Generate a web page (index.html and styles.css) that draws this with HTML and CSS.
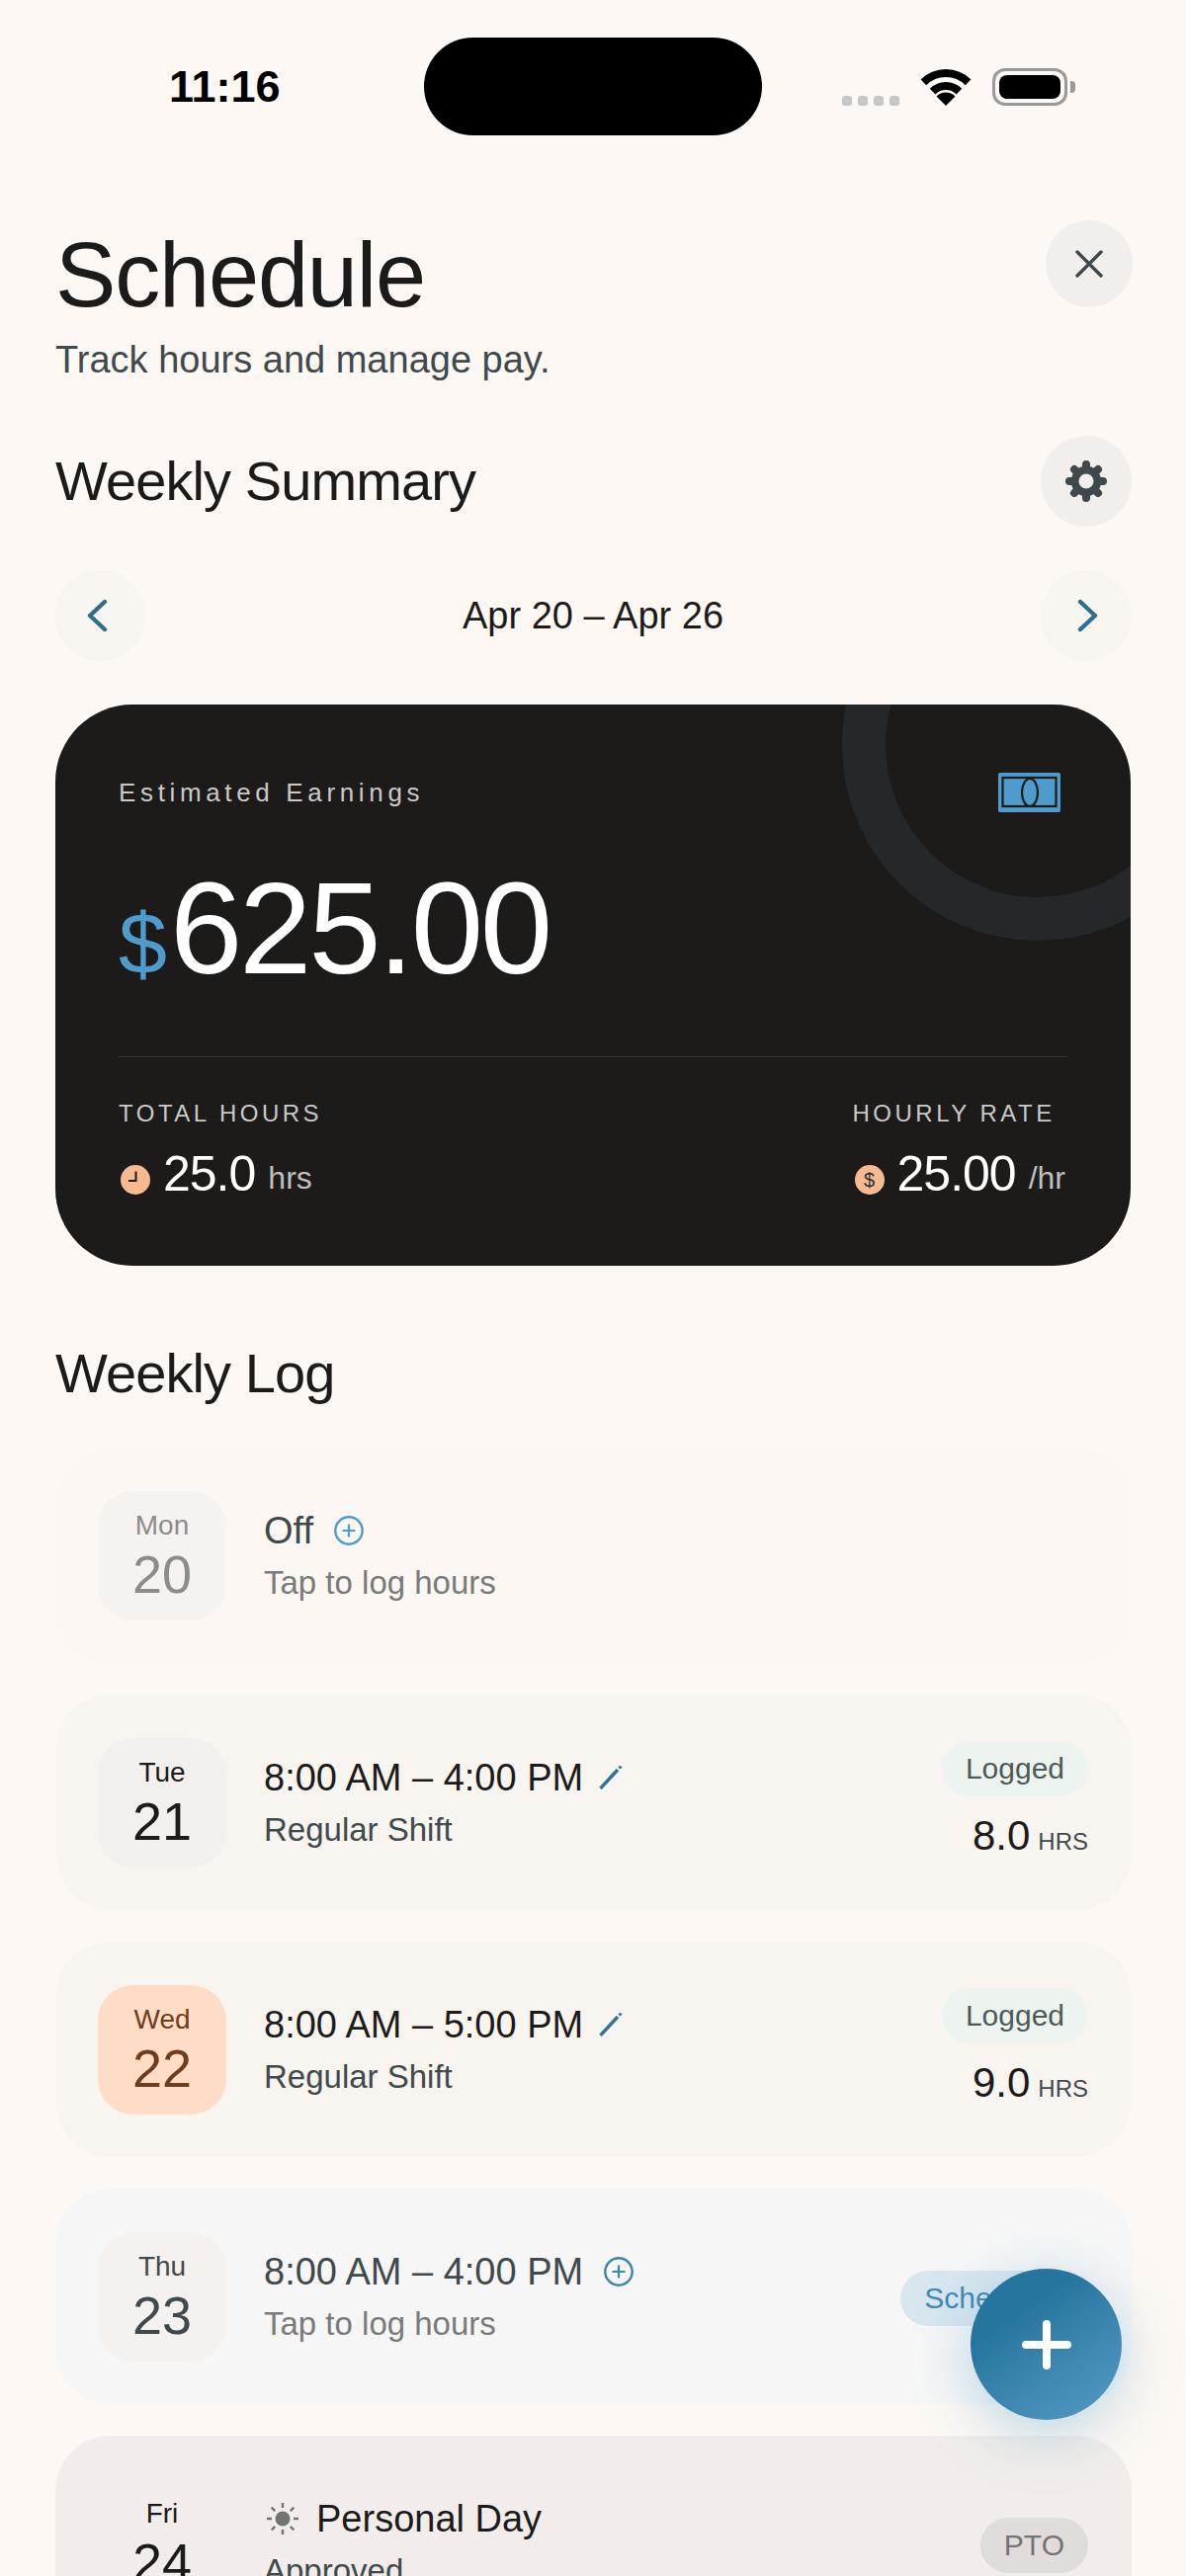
FILE: index.html
```html
<!DOCTYPE html>
<html lang="en">
<head>
    <meta charset="UTF-8">
    <meta name="viewport" content="width=device-width, initial-scale=1.0">
    <title>Schedule</title>
    <link rel="stylesheet" href="styles.css">
</head>
<body>
    <div class="status-bar">
        <div class="time">11:16</div>
        <div class="island"></div>
        <div class="status-icons">
            <div class="signal"><span></span><span></span><span></span><span></span></div>
            <svg class="wifi" viewBox="0 0 52 38">
                <path d="M3.4 14.4a32 32 0 0 1 45.2 0" fill="none" stroke="#000" stroke-width="8"/>
                <path d="M12.6 23.6a19 19 0 0 1 26.8 0" fill="none" stroke="#000" stroke-width="8"/>
                <path d="M26 38L16.5 28.5a13.5 13.5 0 0 1 19 0z"/>
            </svg>
            <div class="battery"><div class="battery-fill"></div></div>
            <div class="battery-nib"></div>
        </div>
    </div>

    <header class="page-head">
        <div>
            <h1>Schedule</h1>
            <p class="subtitle">Track hours and manage pay.</p>
        </div>
        <button class="round-btn close-btn">
            <svg width="28" height="28" viewBox="0 0 28 28"><path d="M2 2l24 24M26 2L2 26" stroke="#3f494b" stroke-width="3.4" stroke-linecap="round"/></svg>
        </button>
    </header>

    <section class="section-head">
        <h2>Weekly Summary</h2>
        <button class="round-btn gear-btn">
            <svg width="42" height="42" viewBox="0 0 24 24" fill="none" stroke="#3f494b">
                <circle cx="12" cy="12" r="6.5" stroke-width="4.4"/>
                <g stroke-width="4.6" stroke-linecap="round">
                    <path d="M12 4v-1.7M12 20v1.700M4 12h-1.700M20 12h1.700"/>
                    <path d="M6.340 6.340L5.140 5.140M17.660 6.340l1.200-1.200M6.340 17.660l-1.200 1.200M17.660 17.660l1.200 1.200"/>
                </g>
            </svg>
        </button>
    </section>

    <nav class="week-nav">
        <button class="round-btn nav-btn">
            <svg class="nav-prev" width="22" height="34" viewBox="0 0 22 34"><path d="M19 3L4 17l15 14" fill="none" stroke="#2e6f8c" stroke-width="4.400" stroke-linecap="round" stroke-linejoin="round"/></svg>
        </button>
        <div class="week-range">Apr 20 – Apr 26</div>
        <button class="round-btn nav-btn">
            <svg class="nav-next" width="22" height="34" viewBox="0 0 22 34"><path d="M3 3l15 14L3 31" fill="none" stroke="#2e6f8c" stroke-width="4.400" stroke-linecap="round" stroke-linejoin="round"/></svg>
        </button>
    </nav>

    <section class="earn-card">
        <div class="earn-ring"></div>
        <div class="earn-top">
            <span class="earn-label">Estimated Earnings</span>
            <svg class="money-icon" width="63" height="40" viewBox="0 0 63 40">
                <rect width="63" height="40" rx="2" fill="#4f9bcb"/>
                <rect x="4.500" y="5" width="54" height="29" fill="none" stroke="#1c1b1a" stroke-width="2.200"/>
                <ellipse cx="32" cy="20" rx="8" ry="14" fill="none" stroke="#1c1b1a" stroke-width="2.200"/>
            </svg>
        </div>
        <div class="earn-amount"><span class="earn-currency">$</span><span>625.00</span></div>
        <div class="earn-divider"></div>
        <div class="earn-stats">
            <div class="stat">
                <div class="stat-label">TOTAL HOURS</div>
                <div class="stat-value">
                    <svg class="stat-icon" viewBox="0 0 30 30">
                        <circle cx="15" cy="15" r="15" fill="#f7b98f"/>
                        <path d="M15.500 6.500v9.500H8" fill="none" stroke="#1c1b1a" stroke-width="2"/>
                    </svg>
                    <span class="stat-num">25.0</span><span class="stat-unit">hrs</span>
                </div>
            </div>
            <div class="stat">
                <div class="stat-label">HOURLY RATE</div>
                <div class="stat-value">
                    <div class="stat-icon dollar-icon">$</div>
                    <span class="stat-num">25.00</span><span class="stat-unit">/hr</span>
                </div>
            </div>
        </div>
    </section>

    <h2 class="log-title">Weekly Log</h2>

    <div class="log-list">
        <div class="log-row row-off">
            <div class="date-box"><span class="date-day">Mon</span><span class="date-num">20</span></div>
            <div class="log-main">
                <div class="log-time">Off
                    <svg class="plus-icon" viewBox="0 0 30 30"><circle cx="15" cy="15" r="13.700" fill="none" stroke="#4f9bcb" stroke-width="2.400"/><path d="M15 8.500v13M8.500 15h13" stroke="#4f9bcb" stroke-width="2.200"/></svg>
                </div>
                <div class="log-sub">Tap to log hours</div>
            </div>
        </div>

        <div class="log-row row-logged">
            <div class="date-box"><span class="date-day">Tue</span><span class="date-num">21</span></div>
            <div class="log-main">
                <div class="log-time">8:00 AM – 4:00 PM
                    <svg class="pencil-icon" viewBox="0 0 24 24"><path d="M1.500 23L19 4" stroke="#2f7595" stroke-width="3.400"/><path d="M20.500 2.500L22.500 .5" stroke="#2f7595" stroke-width="3"/></svg>
                </div>
                <div class="log-sub">Regular Shift</div>
            </div>
            <div class="log-side">
                <span class="badge badge-logged">Logged</span>
                <div class="log-hours">8.0<span>HRS</span></div>
            </div>
        </div>

        <div class="log-row row-logged">
            <div class="date-box date-today"><span class="date-day">Wed</span><span class="date-num">22</span></div>
            <div class="log-main">
                <div class="log-time">8:00 AM – 5:00 PM
                    <svg class="pencil-icon" viewBox="0 0 24 24"><path d="M1.500 23L19 4" stroke="#2f7595" stroke-width="3.400"/><path d="M20.500 2.500L22.500 .5" stroke="#2f7595" stroke-width="3"/></svg>
                </div>
                <div class="log-sub">Regular Shift</div>
            </div>
            <div class="log-side">
                <span class="badge badge-logged">Logged</span>
                <div class="log-hours">9.0<span>HRS</span></div>
            </div>
        </div>

        <div class="log-row row-scheduled">
            <div class="date-box"><span class="date-day">Thu</span><span class="date-num">23</span></div>
            <div class="log-main">
                <div class="log-time">8:00 AM – 4:00 PM
                    <svg class="plus-icon" viewBox="0 0 30 30"><circle cx="15" cy="15" r="13.700" fill="none" stroke="#3c85ad" stroke-width="2.400"/><path d="M15 8.500v13M8.500 15h13" stroke="#3c85ad" stroke-width="2.200"/></svg>
                </div>
                <div class="log-sub">Tap to log hours</div>
            </div>
            <div class="log-side">
                <span class="badge badge-scheduled">Scheduled</span>
            </div>
        </div>

        <div class="log-row row-pto">
            <div class="date-box"><span class="date-day">Fri</span><span class="date-num">24</span></div>
            <div class="log-main">
                <div class="log-time">
                    <svg class="sun-icon" viewBox="0 0 32 32">
                        <circle cx="16" cy="16" r="7.500" fill="#737373"/>
                        <path d="M16 0v5M16 27v5M0 16h5M27 16h5M4.700 4.700l3.500 3.500M23.800 23.800l3.500 3.500M27.300 4.700l-3.500 3.500M8.200 23.800l-3.500 3.500" stroke="#737373" stroke-width="2.400"/>
                    </svg>
                    Personal Day
                </div>
                <div class="log-sub">Approved</div>
            </div>
            <div class="log-side">
                <span class="badge badge-pto">PTO</span>
            </div>
        </div>
    </div>

    <button class="fab">
        <svg width="50" height="50" viewBox="0 0 50 50"><path d="M25 4v42M4 25h42" stroke="#fff" stroke-width="8" stroke-linecap="round"/></svg>
    </button>
</body>
</html>
```
FILE: styles.css
```css
* {
    box-sizing: border-box;
}
body {
    position: relative;
    width: 1200px;
    height: 2607px;
    margin: 0;
    overflow: hidden;
    font-family: "Liberation Sans", Arial, sans-serif;
    background-color: #fdf8f3;
    color: #1c1b1a;
}
button {
    border: none;
    padding: 0;
    font-family: inherit;
}
h1, h2, p {
    margin: 0;
    font-weight: 400;
}

/* status bar */
.status-bar {
    display: grid;
    grid-template-columns: 429px 342px 1fr;
    height: 137px;
    padding-top: 38px;
}
.time {
    padding-left: 171px;
    font-size: 45px;
    font-weight: 700;
    line-height: 100px;
    color: #000;
}
.island {
    height: 99px;
    border-radius: 50px;
    background-color: #000;
}
.status-icons {
    position: relative;
    display: flex;
    align-items: flex-end;
    height: 69px;
    padding-left: 81px;
}
.signal {
    display: flex;
    gap: 6px;
    margin-bottom: 0;
}
.signal span {
    width: 10px;
    height: 10px;
    border-radius: 3px;
    background-color: #c6c6c6;
}
.wifi {
    width: 52px;
    height: 38px;
    margin-left: 21px;
}
.battery {
    width: 76px;
    height: 38px;
    margin-left: 21px;
    padding: 4px;
    border: 3px solid #999;
    border-radius: 13px;
}
.battery-fill {
    height: 100%;
    border-radius: 8px;
    background-color: #000;
}
.battery-nib {
    width: 5px;
    height: 12px;
    margin: 0 0 13px 3px;
    border-radius: 0 4px 4px 0;
    background-color: #999;
}

/* headers */
.page-head {
    display: flex;
    justify-content: space-between;
    align-items: flex-start;
    margin-top: 86px;
    padding: 9px 54px 0 56px;
}
.round-btn {
    display: flex;
    flex-shrink: 0;
    justify-content: center;
    align-items: center;
    width: 92px;
    height: 92px;
    border-radius: 50%;
    background-color: #f2eeeb;
}
.close-btn {
    width: 88px;
    height: 88px;
    margin-top: -9px;
}
h1 {
    font-size: 92px;
    line-height: 92px;
    letter-spacing: -1.2px;
}
.subtitle {
    margin-top: 17px;
    font-size: 38px;
    line-height: 46px;
    color: #40494b;
}
.section-head {
    display: flex;
    justify-content: space-between;
    align-items: center;
    margin-top: 54px;
    padding: 0 55px 0 56px;
}
h2 {
    font-size: 56px;
    line-height: 64px;
    letter-spacing: -0.9px;
}
.week-nav {
    display: flex;
    justify-content: space-between;
    align-items: center;
    margin-top: 44px;
    padding: 0 55px 0 55px;
}
.nav-btn {
    background-color: #f8f4f0;
}
.nav-prev {
    margin-left: -6px;
}
.nav-next {
    margin-right: -5px;
}
.week-range {
    font-size: 38px;
    line-height: 46px;
    color: #1c1b1a;
}

/* earnings card */
.earn-card {
    position: relative;
    height: 568px;
    margin: 44px 56px 0;
    padding: 69px 64px 0;
    overflow: hidden;
    border-radius: 78px;
    background-color: #1c1b1a;
    color: #fff;
}
.earn-ring {
    position: absolute;
    top: -157px;
    right: -104px;
    width: 396px;
    height: 396px;
    border: 44px solid #24282b;
    border-radius: 50%;
}
.earn-top {
    position: relative;
    display: flex;
    justify-content: space-between;
    align-items: center;
    height: 40px;
    padding-right: 7px;
}
.earn-label {
    padding-top: 1px;
    font-size: 26px;
    letter-spacing: 4.65px;
    color: #c9c9c9;
}
.earn-amount {
    position: relative;
    display: flex;
    align-items: baseline;
    height: 132px;
    margin-top: 52px;
    font-size: 132px;
    line-height: 132px;
    letter-spacing: -3.3px;
}
.earn-currency {
    margin-right: 6px;
    font-size: 88px;
    letter-spacing: -3px;
    color: #4f9bcb;
}
.earn-divider {
    height: 1px;
    margin-top: 63px;
    background-color: #3a3a3a;
}
.earn-stats {
    display: flex;
    justify-content: space-between;
    margin-top: 43px;
    padding-right: 2px;
}
.stat-label {
    font-size: 24px;
    line-height: 28px;
    letter-spacing: 3.5px;
    color: #c9c9c9;
}
.stat-value {
    display: flex;
    align-items: center;
    margin-top: 19px;
    height: 56px;
}
.stat-icon {
    width: 30px;
    height: 30px;
    margin: 12px 13px 0 2px;
}
.dollar-icon {
    border-radius: 50%;
    background-color: #f7b98f;
    font-size: 20px;
    line-height: 30px;
    text-align: center;
    color: #263238;
}
.stat-num {
    font-size: 50px;
    line-height: 56px;
    letter-spacing: -1px;
}
.stat-unit {
    margin: 8px 0 0 13px;
    font-size: 32px;
    color: #bfbfbf;
}

/* weekly log */
.log-title {
    margin: 77px 56px 0;
}
.log-list {
    display: flex;
    flex-direction: column;
    gap: 32px;
    margin: 43px 55px 0 56px;
}
.log-row {
    display: flex;
    flex-shrink: 0;
    align-items: center;
    height: 218px;
    padding: 0 44px 0 43px;
    border-radius: 56px;
    background-color: #f8f4f0;
}
.row-off {
    background-color: #fcf7f2;
}
.row-scheduled {
    background-color: #f6f6f6;
}
.row-pto {
    background-color: #f2edea;
}
.date-box {
    display: flex;
    flex-direction: column;
    flex-shrink: 0;
    justify-content: center;
    align-items: center;
    gap: 5px;
    width: 130px;
    height: 131px;
    margin-right: 38px;
    border-radius: 36px;
    background-color: #f3efec;
    color: #1c1b1a;
}
.row-off .date-box {
    background-color: #f6f2ef;
    color: #8c8c89;
}
.row-scheduled .date-box {
    background-color: #f5f1ee;
    color: #40494b;
}
.row-pto .date-box {
    background-color: transparent;
}
.date-today {
    background-color: #ffdcc6;
    color: #6f3d1c;
}
.date-day {
    font-size: 28px;
    line-height: 32px;
}
.date-num {
    font-size: 54px;
    line-height: 56px;
}
.log-main {
    flex: 1;
}
.log-time {
    display: flex;
    align-items: center;
    gap: 21px;
    font-size: 38px;
    line-height: 46px;
}
.row-off .log-time, .row-scheduled .log-time {
    color: #40494b;
}
.log-sub {
    margin-top: 10px;
    font-size: 33px;
    line-height: 40px;
    color: #40494b;
}
.row-off .log-sub, .row-scheduled .log-sub {
    color: #7a7a7a;
}
.plus-icon {
    width: 30px;
    height: 30px;
}
.pencil-icon {
    width: 24px;
    height: 24px;
    margin-left: -5px;
}
.sun-icon {
    width: 32px;
    height: 32px;
    margin: 0 -3px 0 3px;
}
.log-side {
    display: flex;
    flex-direction: column;
    align-items: flex-end;
    gap: 14px;
    padding-top: 4px;
}
.badge {
    height: 56px;
    padding: 0 24px;
    border-radius: 28px;
    font-size: 30px;
    line-height: 56px;
}
.badge-logged {
    background-color: #edf3ee;
    color: #4e5a58;
}
.badge-scheduled {
    background-color: #d8e6ef;
    color: #3c8ab4;
}
.badge-pto {
    background-color: #e0dcda;
    color: #737373;
}
.log-hours {
    font-size: 42px;
    line-height: 52px;
}
.log-hours span {
    margin-left: 8px;
    font-size: 24px;
    color: #40494b;
}

/* floating add button */
.fab {
    position: absolute;
    top: 2296px;
    left: 982px;
    display: flex;
    justify-content: center;
    align-items: center;
    width: 153px;
    height: 153px;
    border-radius: 50%;
    background: linear-gradient(145deg, #26759e 30%, #3f89b2 65%, #539ac6 100%);
    box-shadow: 0 14px 60px rgba(79, 155, 203, 0.38);
}
```
